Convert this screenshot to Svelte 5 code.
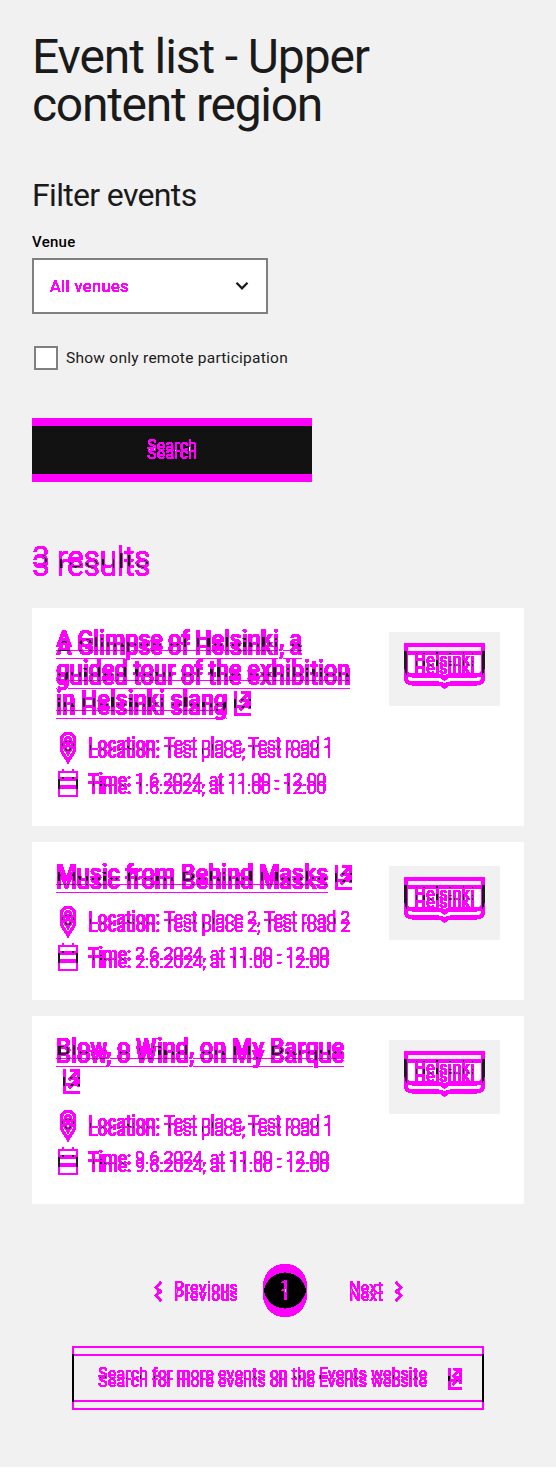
<script>
  const filters = [
    { id: 'ink', both: '#1a1a1a', dy: 8 },
    { id: 'black', both: '#000000', dy: 8 },
    { id: 'fill', both: '#121212', dy: 8 },
    { id: 'light', both: '#ffffff', dy: 8 },
    { id: 'muted', both: '#999999', dy: 8 },
    { id: 'solid', both: '#ff00ff', dy: 0 },
  ];

  const events = [
    {
      title: [['A Glimpse of Helsinki, a', 246], ['guided tour of the exhibition', 294], ['in Helsinki slang', 171]],
      wrapIcon: false,
      place: 'Test place, Test road 1', placeWidth: 169,
      time: '1.6.2024, at 11.00 - 12.00', timeWidth: 191,
    },
    {
      title: [['Music from Behind Masks', 272]],
      wrapIcon: false,
      place: 'Test place 2, Test road 2', placeWidth: 186,
      time: '2.6.2024, at 11.00 - 12.00', timeWidth: 194,
    },
    {
      title: [['Blow, o Wind, on My Barque', 288]],
      wrapIcon: true,
      place: 'Test place, Test road 1', placeWidth: 169,
      time: '9.6.2024, at 11.00 - 12.00', timeWidth: 194,
    },
  ];

  // Tracks a single line of text so that it fills the given width.
  function fit(node, width) {
    const natural = node.getBoundingClientRect().width;
    const spacing = (width - natural) / node.textContent.length;
    node.style.letterSpacing = spacing.toFixed(3) + 'px';
  }
</script>

{#snippet external(size)}
  <svg class="ext" width={size} height={size} viewBox="0 0 17 17" fill="none" stroke="currentColor" stroke-width="2.8">
    <path d="M1.400 0V15.600H17M7 1.400H15.600V10M15.600 1.400L6 11" />
  </svg>
{/snippet}

<svg class="defs" width="0" height="0" aria-hidden="true">
  {#each filters as f}
    <filter id={f.id} x="-20%" y="-60%" width="140%" height="260%" color-interpolation-filters="sRGB">
      <feOffset in="SourceAlpha" dy={f.dy} result="moved" />
      <feComposite in="SourceAlpha" in2="moved" operator="over" />
      <feComponentTransfer result="any"><feFuncA type="linear" slope="20" intercept="-2" /></feComponentTransfer>
      <feComposite in="SourceAlpha" in2="moved" operator="in" />
      <feComponentTransfer result="common"><feFuncA type="linear" slope="10" intercept="-9" /></feComponentTransfer>
      <feFlood flood-color="#ff00ff" />
      <feComposite in2="any" operator="in" result="changed" />
      <feFlood flood-color={f.both} />
      <feComposite in2="common" operator="in" result="kept" />
      <feMerge><feMergeNode in="changed" /><feMergeNode in="kept" /></feMerge>
    </filter>
  {/each}
</svg>

<main>
  <h1><span use:fit={337}>Event list - Upper</span><span use:fit={290}>content region</span></h1>
  <h2><span use:fit={164.5}>Filter events</span></h2>

  <div class="label"><span use:fit={43.5}>Venue</span></div>
  <div class="select">
    <span class="solid" use:fit={79}>All venues</span>
    <svg width="14" height="10" viewBox="0 0 14 10" fill="none" stroke="#1a1a1a" stroke-width="2.3"><path d="M1.5 1.8L7 7.3L12.5 1.8" /></svg>
  </div>

  <div class="check"><i></i><span use:fit={222}>Show only remote participation</span></div>

  <div class="search"><div class="plate"></div><div class="caption"><span use:fit={50}>Search</span></div></div>

  <h2 class="results"><span use:fit={118}>3 results</span></h2>

  <section>
    {#each events as e}
      <article>
        <div class="text">
          <h3>
            {#each e.title as line, i}
              <div><span class="underlined" use:fit={line[1]}>{line[0]}</span>{#if i === e.title.length - 1 && !e.wrapIcon}{@render external(17)}{/if}</div>
            {/each}
            {#if e.wrapIcon}<div>{@render external(17)}</div>{/if}
          </h3>
          <div class="row">
            <svg width="24" height="24" viewBox="0 0 24 24" fill="none" stroke="currentColor" stroke-width="2.6">
              <path d="M12 21C10 17 5.300 13.500 5.300 8A6.700 6.700 0 0 1 18.700 8C18.700 13.500 14 17 12 21Z" /><circle cx="12" cy="8" r="2.500" />
            </svg>
            <b use:fit={72}>Location:</b><span use:fit={e.placeWidth}>{e.place}</span>
          </div>
          <div class="row">
            <svg width="24" height="24" viewBox="0 0 24 24" fill="none" stroke="currentColor" stroke-width="2">
              <path d="M3 4H21V20H3ZM3 10H21M7 1V4M17 1V4" />
            </svg>
            <b use:fit={43}>Time:</b><span use:fit={e.timeWidth}>{e.time}</span>
          </div>
        </div>
        <div class="thumb">
          <svg width="81" height="45" viewBox="0 0 81 45">
            <path fill="#fff" d="M2 10H79V34Q79 41 72 41H47L40.500 44L34 41H9Q2 41 2 34Z" />
            <g class="mark">
              <path fill="none" stroke="#000" stroke-width="3.400" d="M1.700 1.700H79.300V26Q79.300 32.500 72 32.500H47Q43 32.700 40.500 35.500Q38 32.700 34 32.500H9Q1.700 32.500 1.700 26Z" />
              <text x="10.500" y="23" textLength="60" lengthAdjust="spacingAndGlyphs">Helsinki</text>
            </g>
          </svg>
        </div>
      </article>
    {/each}
  </section>

  <nav>
    <div class="prev">
      <svg width="8" height="13" viewBox="0 0 8 13" fill="none" stroke="currentColor" stroke-width="2.200"><path d="M7 1L1.800 6.500L7 12" /></svg>
      <span use:fit={64}>Previous</span>
    </div>
    <div class="page"><div class="disc"></div><span>1</span></div>
    <div class="next">
      <span use:fit={34}>Next</span>
      <svg width="8" height="13" viewBox="0 0 8 13" fill="none" stroke="currentColor" stroke-width="2.200"><path d="M1 1L6.200 6.500L1 12" /></svg>
    </div>
  </nav>

  <div class="more"><span use:fit={329}>Search for more events on the Events website</span>{@render external(13.5)}</div>
</main>

<style>
  :global(body) { background: #fff; }
  .defs { position: absolute; }
  main {
    box-sizing: border-box;
    height: 1467px;
    padding: 33px 32px 0;
    background: #f1f1f1;
    color: #1a1a1a;
    font-family: Roboto, sans-serif;
    font-size: 16px;
    line-height: 24px;
  }
  span, b { display: inline-block; white-space: pre; }
  svg { display: block; flex: none; }
  h1, h2, h3 { margin: 0; font-weight: 400; }
  h1 { display: flex; flex-direction: column; align-items: flex-start; font-size: 48px; line-height: 48px; }
  h2 { margin-top: 47px; height: 38px; font-size: 32px; line-height: 38px; }
  .label { margin-top: 18px; height: 20px; font-size: 15px; font-weight: 500; line-height: 20px; color: #000; }
  .select {
    box-sizing: border-box;
    display: flex;
    justify-content: space-between;
    align-items: center;
    width: 236px;
    height: 56px;
    margin-top: 6px;
    padding: 0 17px 0 16px;
    border: 2px solid #808080;
    background: #fff;
  }
  .solid { padding-top: 2px; font-size: 16.5px; filter: url(#solid); }
  .check { display: flex; align-items: center; height: 24px; margin: 32px 0 0 2px; }
  .check i { box-sizing: border-box; width: 24px; height: 24px; margin-right: 8px; border: 2px solid #808080; background: #fff; }
  .check span { font-size: 15.5px; }
  .search { display: grid; width: 280px; height: 56px; margin-top: 48px; }
  .search > * { grid-area: 1 / 1; }
  .plate { background: #000; filter: url(#fill); }
  .caption { padding-top: 16px; text-align: center; font-weight: 500; filter: url(#light); }
  .results { margin-top: 64px; filter: url(#ink); }
  section { display: flex; flex-direction: column; gap: 16px; margin-top: 32px; }
  article { display: flex; justify-content: space-between; padding: 16px 24px 34px; background: #fff; }
  .text { width: 300px; filter: url(#ink); }
  h3 { margin-bottom: 18px; font-size: 24px; font-weight: 700; line-height: 30px; }
  h3 div { display: flex; height: 30px; }
  h3 .ext { margin: 7px 0 0 7px; }
  .underlined { text-decoration: underline; text-decoration-thickness: 1px; text-underline-offset: 3px; }
  .row { display: flex; height: 24px; font-size: 18px; }
  .row + .row { margin-top: 12px; }
  .row svg { margin-right: 8px; }
  .row b { margin-right: 4px; }
  .thumb { box-sizing: border-box; width: 111px; height: 74px; margin-top: 8px; padding: 11px 15px; background: #f1f1f1; }
  .thumb svg { overflow: visible; }
  .mark { filter: url(#ink); }
  .thumb text { font: 700 19px Roboto, sans-serif; }
  nav { display: flex; align-items: flex-start; height: 45px; margin: 60px 0 0 122px; font-weight: 500; }
  .prev, .next { display: flex; align-items: center; height: 24px; margin-top: 11px; }
  .prev span, .next span { padding-top: 2px; }
  .prev { gap: 12px; filter: url(#muted); }
  .next { gap: 12px; margin-left: 42px; filter: url(#muted); }
  .page { display: grid; width: 44px; height: 45px; margin-left: 25px; }
  .page > * { grid-area: 1 / 1; }
  .disc { border-radius: 50%; background: #000; filter: url(#black); }
  .page span { padding-top: 11px; text-align: center; filter: url(#light); }
  .more {
    box-sizing: border-box;
    display: flex;
    justify-content: space-between;
    width: 412px;
    height: 56px;
    margin: 37px 0 0 40px;
    padding: 14px 20.5px 0 24px;
    border: 2px solid #000;
    font-weight: 500;
    filter: url(#black);
  }
  .more .ext { margin-top: 6px; }
</style>
